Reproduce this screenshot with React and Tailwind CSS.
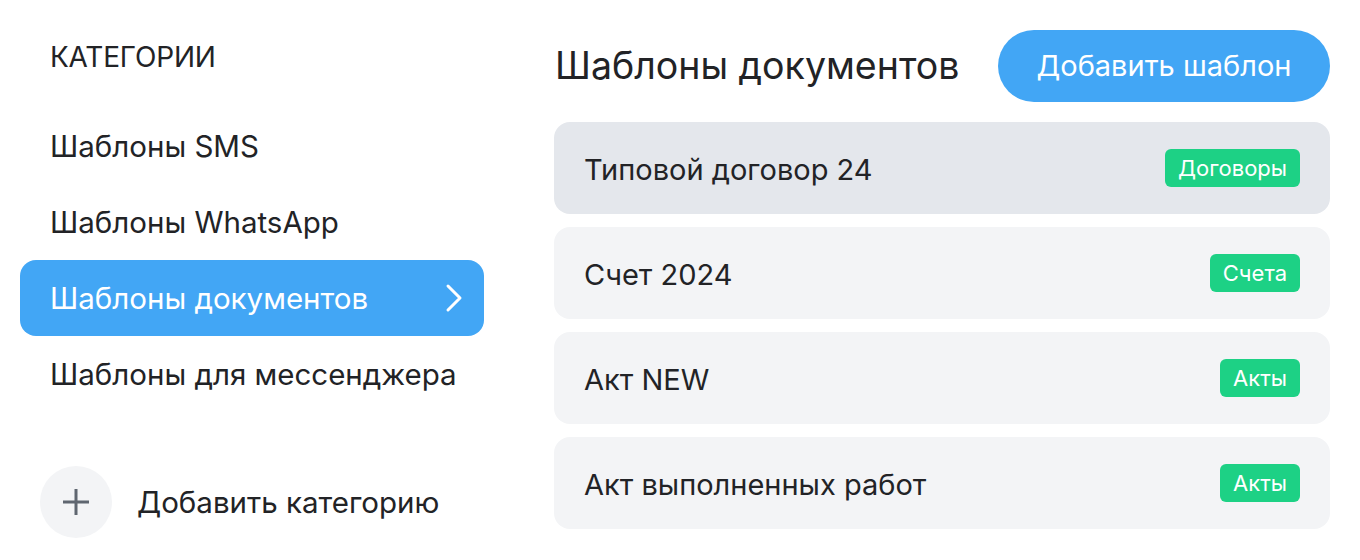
import React from "react";

const categories = [
  { name: "Шаблоны SMS" },
  { name: "Шаблоны WhatsApp" },
  { name: "Шаблоны документов", active: true },
  { name: "Шаблоны для мессенджера" },
];

const templates = [
  { title: "Типовой договор 24", tag: "Договоры", selected: true },
  { title: "Счет 2024", tag: "Счета" },
  { title: "Акт NEW", tag: "Акты" },
  { title: "Акт выполненных работ", tag: "Акты" },
];

const App = () => {
  return (
    <div
      className="w-[1360px] h-[560px] bg-white text-[#222326] flex"
      style={{ fontFamily: "Inter, 'Noto Sans', sans-serif" }}
    >
      {/* Sidebar */}
      <div className="w-[464px] ml-[20px] flex flex-col">
        <div className="h-[108px] pl-[30px] pt-[40px] text-[28px] leading-[34px] tracking-[-0.2px]">
          КАТЕГОРИИ
        </div>
        {categories.map((cat) => (
          <div
            key={cat.name}
            className={`h-[76px] pl-[30px] pr-[20px] flex items-center justify-between rounded-[16px] text-[29.5px] ${
              cat.active ? "bg-[#42a6f5] text-white" : ""
            }`}
          >
            <span>{cat.name}</span>
            {cat.active && (
              <svg width="20" height="32" viewBox="0 0 20 32" fill="none">
                <path d="M4 4 L16 16 L4 28" stroke="white" strokeWidth="3" strokeLinecap="round" strokeLinejoin="round" />
              </svg>
            )}
          </div>
        ))}
        <div className="mt-[54px] pl-[20px] flex items-center gap-[25px]">
          <div className="w-[72px] h-[72px] rounded-full bg-[#f3f4f6] flex items-center justify-center">
            <svg width="30" height="30" viewBox="0 0 30 30">
              <path d="M15 2 V28 M2 15 H28" stroke="#5f6670" strokeWidth="3" />
            </svg>
          </div>
          <span className="text-[29.5px]">Добавить категорию</span>
        </div>
      </div>

      {/* Main */}
      <div className="ml-[70px] w-[776px] flex flex-col">
        <div className="mt-[30px] h-[72px] flex items-center justify-between">
          <h1 className="text-[37.5px] pl-[1px]">Шаблоны документов</h1>
          <button className="h-[72px] w-[332px] rounded-full bg-[#42a6f5] text-white text-[29px]">
            Добавить шаблон
          </button>
        </div>
        <div className="mt-[20px] flex flex-col gap-[13px]">
          {templates.map((t) => (
            <div
              key={t.title}
              className={`h-[92px] rounded-[16px] pl-[30px] pr-[30px] flex items-center justify-between ${
                t.selected ? "bg-[#e4e7ec]" : "bg-[#f3f4f6]"
              }`}
            >
              <span className="text-[29px] pt-[3px]">{t.title}</span>
              <span className="h-[38px] px-[13px] rounded-[6px] bg-[#1dd185] text-white text-[22px] flex items-center">
                {t.tag}
              </span>
            </div>
          ))}
        </div>
      </div>
    </div>
  );
};

export default App;
